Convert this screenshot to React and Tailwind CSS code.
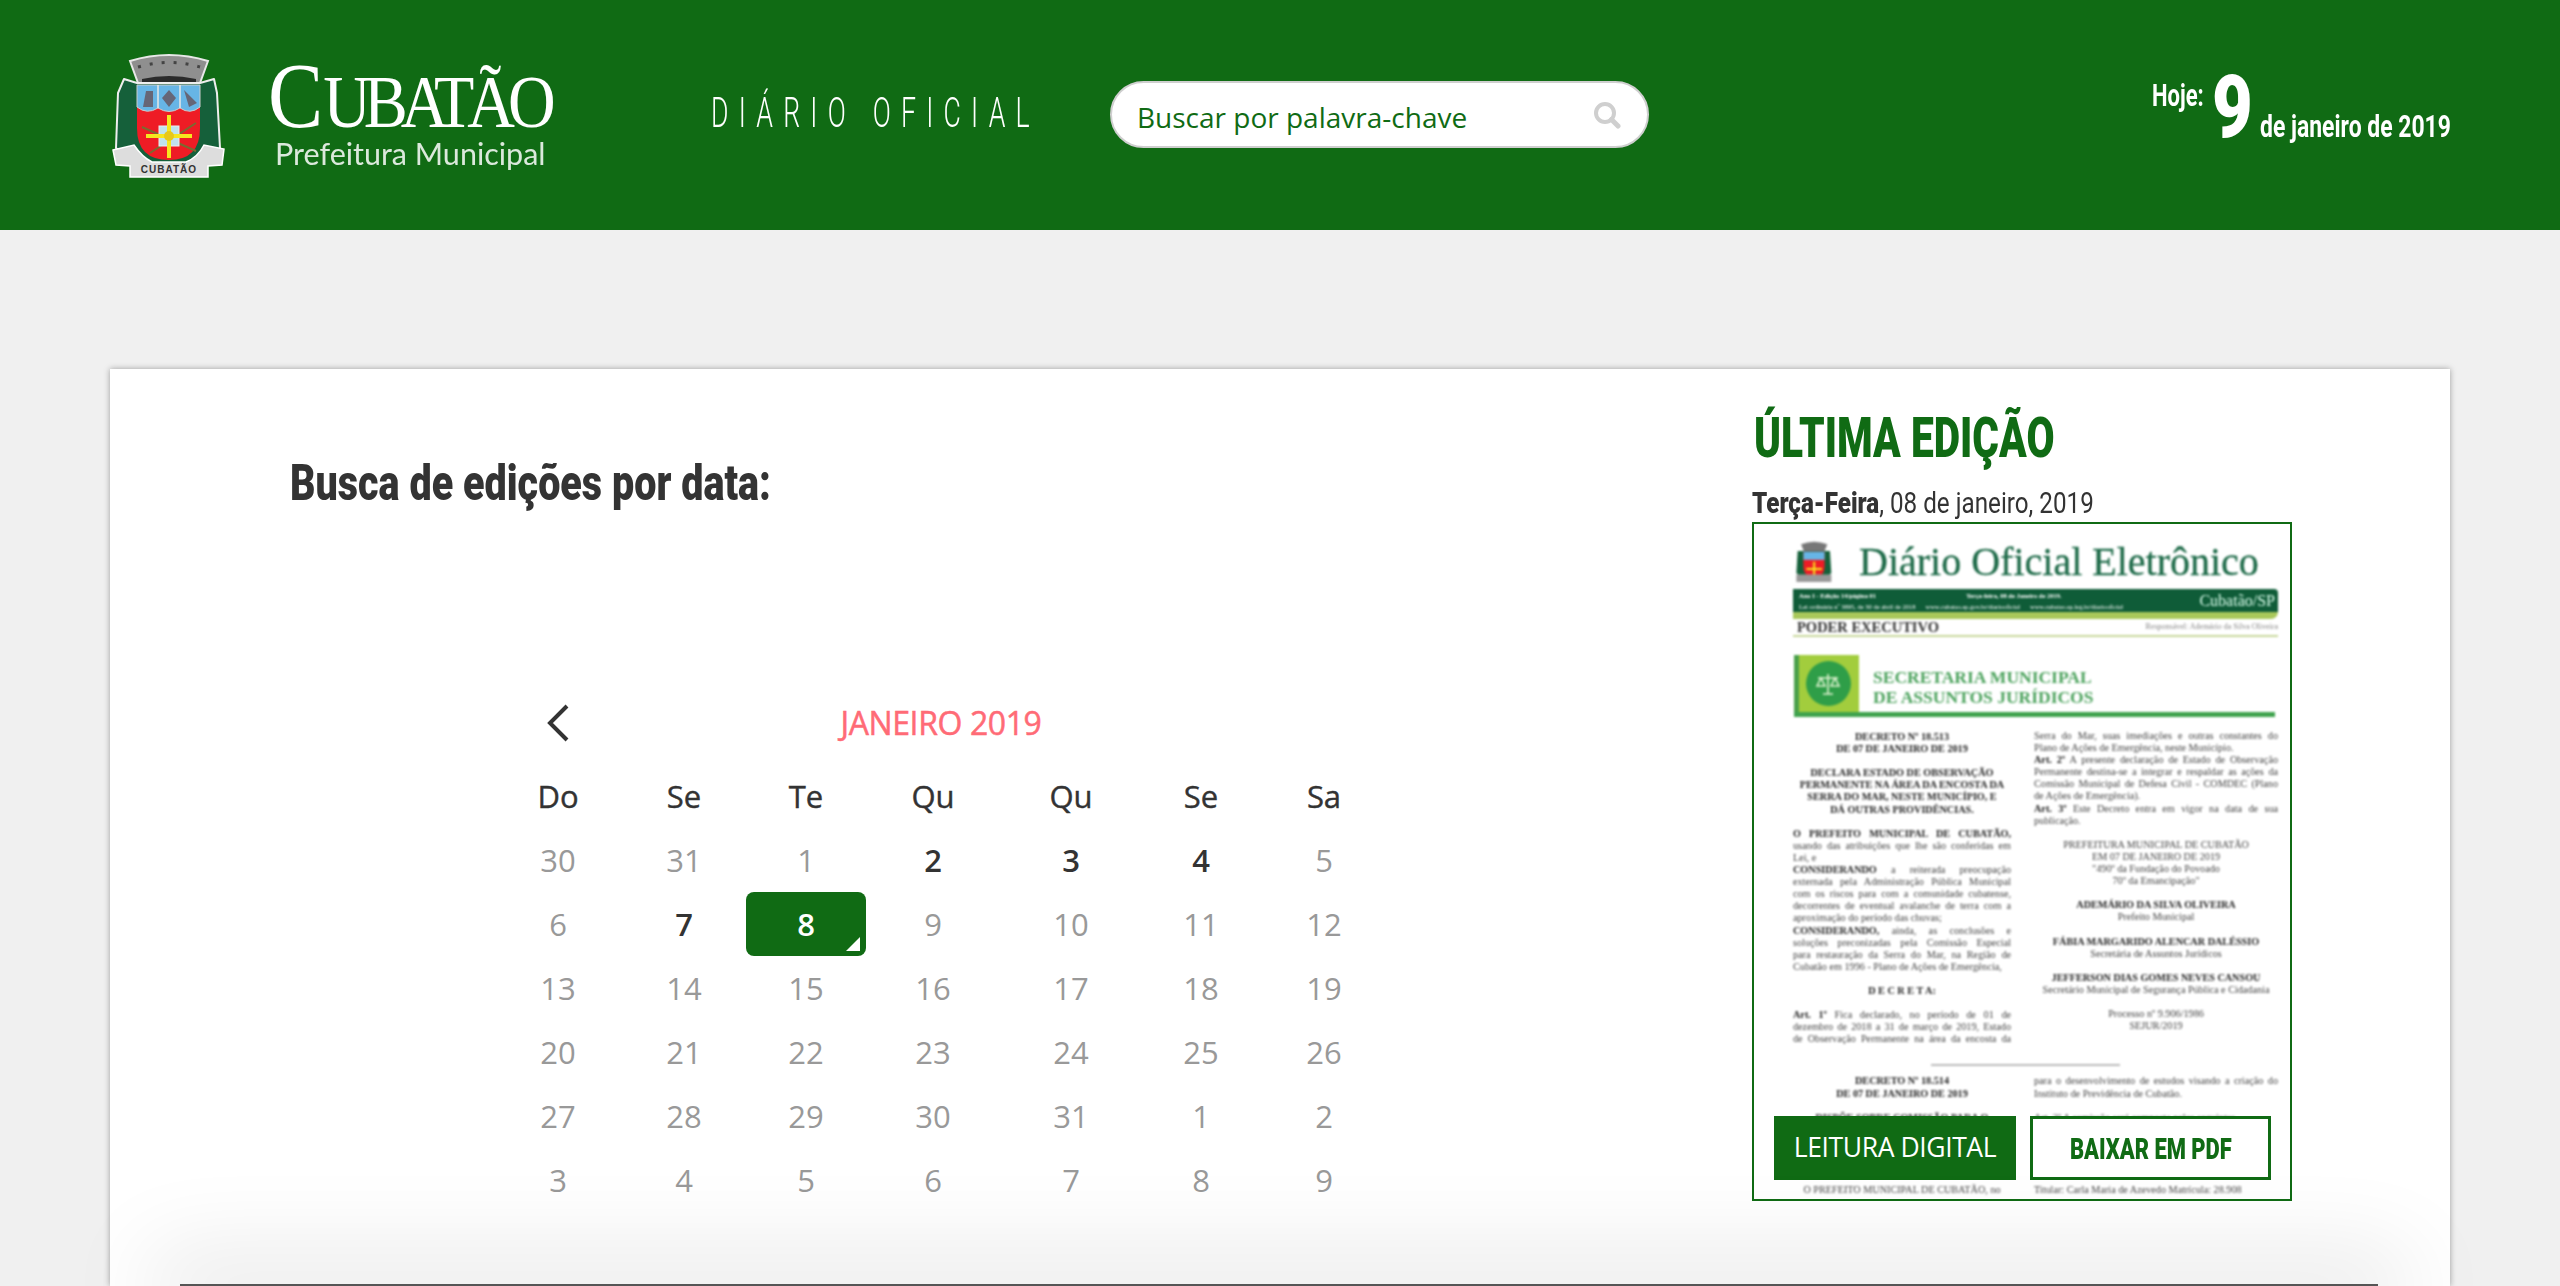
const G = "#106b14";
const cond = { fontFamily: 'Roboto,"Liberation Sans",sans-serif' };

function Crest() {
  return (
    <svg width="113" height="125" viewBox="0 0 113 125" className="shrink-0">
      <path d="M18 8 Q57 -4 96 8 L88 30 H26 Z" fill="#8f8f8f" stroke="#e8e8e8" strokeWidth="2" />
      <path d="M26 14 Q57 5 88 14" stroke="#444" strokeWidth="3" strokeDasharray="3 9" fill="none" />
      <path d="M30 26 Q57 20 84 26 V31 H30 Z" fill="#2b2b2b" />
      <path d="M12 26 L25 30 H88 L102 26 L105 40 L108 95 L90 112 H24 L4 95 L6 40 Z" fill="#15603a" stroke="#eee" strokeWidth="2" strokeLinejoin="round" />
      <path d="M25 32 H88 V75 Q88 107 57 107 Q25 107 25 75 Z" fill="#ee1c25" />
      <path d="M25 32 H88 V54 Q78 62 68 55 Q57 62 46 55 Q35 62 25 54 Z" fill="#67b5e6" stroke="#ccc" strokeWidth="1" />
      <path d="M46 32 V55 M68 32 V55" stroke="#e8e8e8" strokeWidth="1.5" />
      <path d="M34 38 H41 V54 H31 Z M57 37 L64 45 L57 54 L50 45 Z M72 37 L85 50 L77 54 Z" fill="#667" />
      <path d="M30 74 L84 98 M84 70 L38 100" stroke="#7a6a30" strokeWidth="2" />
      <rect x="47" y="73" width="20" height="20" fill="#bfe3ee" stroke="#eee" />
      <path d="M34 83 H80 M57 62 V105" stroke="#f6e61f" strokeWidth="4" />
      <circle cx="57" cy="83" r="5" fill="#e8c81a" />
      <path d="M1 97 L22 92 Q30 104 40 109 L74 109 Q86 104 92 92 L112 96 L110 112 L96 113 V124 H18 V113 L4 112 Z" fill="#ddd" stroke="#fff" strokeWidth="1.5" />
      <text x="57" y="120" textAnchor="middle" fontSize="10" fontWeight="700" letterSpacing="1" fill="#333" fontFamily="Liberation Sans">CUBATÃO</text>
    </svg>
  );
}

function Logo() {
  return (
    <div className="w-[284px] h-[110px] text-white">
      <div className="flex items-end h-[66px] mt-[3px] whitespace-nowrap origin-left scale-x-[.88]" style={{ fontFamily: '"Liberation Serif",serif' }}>
        <span className="text-[94px] leading-[66px]">C</span>
        <span className="text-[75px] leading-[52px] tracking-[-8px]">UBATÃO</span>
      </div>
      <div className="mt-[7px] ml-[7px] text-[30.5px] leading-[36px] whitespace-nowrap opacity-85" style={{ fontFamily: 'Lato,sans-serif' }}>Prefeitura Municipal</div>
    </div>
  );
}

function Header() {
  return (
    <header className="h-[230px] w-full flex items-center pl-[112px] pr-[110px]" style={{ backgroundColor: G }}>
      <Crest />
      <div className="ml-[43px]"><Logo /></div>
      <div className="ml-[159px] w-[320px] text-white text-[43px] leading-none tracking-[16.5px] whitespace-nowrap font-light mt-[-5px]" style={cond}>
        <span className="block origin-left scale-x-[.62]">DIÁRIO OFICIAL</span>
      </div>
      <div className="ml-[79px] w-[539px] h-[67px] rounded-full bg-white border-2 border-[#cfcfcf] flex items-center pl-[25px] pr-[26px] mt-[-1px]">
        <span className="text-[28px] flex-1 mt-[4px]" style={{ color: G, fontFamily: '"Open Sans",sans-serif' }}>Buscar por palavra-chave</span>
        <svg width="28" height="28" viewBox="0 0 28 28" fill="none" stroke="#cfcfcf">
          <circle cx="12" cy="12" r="9" strokeWidth="4" />
          <path d="M18.5 18.5 L25 25" strokeWidth="5" strokeLinecap="round" />
        </svg>
      </div>
      <div className="ml-auto w-[298px] h-[63px] flex text-white whitespace-nowrap font-bold mt-[-1px]" style={cond}>
        <span className="text-[31px] leading-[28px] w-[60px] mt-[-1px]"><span className="block origin-left scale-x-[.71]">Hoje:</span></span>
        <span className="text-[88px] leading-[63px] w-[48px] font-black mt-[-8px]"><span className="block origin-left scale-x-[.8]">9</span></span>
        <span className="text-[31px] leading-[30px] mt-[29px]"><span className="block origin-left scale-x-[.74]">de janeiro de 2019</span></span>
      </div>
    </header>
  );
}

const names = ["Do", "Se", "Te", "Qu", "Qu", "Se", "Sa"];
const days = [30, 31, 1, 2, 3, 4, 5, 6, 7, 8, 9, 10, 11, 12, 13, 14, 15, 16, 17, 18, 19, 20, 21, 22, 23, 24, 25, 26, 27, 28, 29, 30, 31, 1, 2, 3, 4, 5, 6, 7, 8, 9];
const active = new Set([3, 4, 5, 8]);

function Calendar() {
  return (
    <div className="w-[894px] ml-[384px] mt-[188px]" style={{ fontFamily: '"Open Sans",sans-serif' }}>
      <div className="grid grid-cols-[128px_1fr_128px] items-center h-[48px]">
        <div className="flex justify-center">
          <svg width="24" height="38" viewBox="0 0 24 38" fill="none" stroke="#333" strokeWidth="4"><path d="M21 2 L4 19 L21 36" /></svg>
        </div>
        <div className="text-center text-[32px] [-webkit-text-stroke:0.5px] tracking-[-0.4px] text-[#ff6b76]">JANEIRO 2019</div>
        <div />
      </div>
      <div className="grid grid-cols-[128px_124px_120px_134px_142px_118px_128px] auto-rows-[64px] mt-[17px] items-center text-center text-[31px]">
        {names.map((n, i) => <div key={i} className="text-[#333] [-webkit-text-stroke:0.4px]">{n}</div>)}
        {days.map((d, i) => {
          if (i === 9) return (
            <div key={i} className="relative h-[64px] rounded-[8px] flex items-center justify-center text-white font-semibold" style={{ backgroundColor: G }}>
              {d}
              <span className="absolute right-[6px] bottom-[5px] w-0 h-0 border-l-[14px] border-l-transparent border-b-[14px] border-b-white" />
            </div>
          );
          return <div key={i} className={active.has(i) ? "text-[#333] font-semibold" : "text-[#999]"}>{d}</div>;
        })}
      </div>
    </div>
  );
}

function L({ children, j, b, c }) {
  const cls = "h-[12.1px] whitespace-nowrap " + (j ? "[text-align-last:justify] " : "") + (c ? "text-center " : "") + (b ? "font-bold text-[#222]" : "text-[#444]");
  return <div className={cls}>{children}</div>;
}

function Doc() {
  return (
    <div className="pl-[39px] pr-[12px] pt-[17px] blur-[0.8px]" style={{ fontFamily: '"Liberation Serif",serif' }}>
      <div className="flex items-center h-[42px]">
        <svg width="38" height="42" viewBox="0 0 113 125" className="shrink-0 ml-[2px]">
          <path d="M18 10 Q57 -5 96 10 L88 30 H26 Z" fill="#777" />
          <path d="M8 30 H104 L108 95 L90 112 H24 L4 95 Z" fill="#15603a" />
          <path d="M25 32 H88 V75 Q88 107 57 107 Q25 107 25 75 Z" fill="#ee1c25" />
          <path d="M25 32 H88 V56 H25 Z" fill="#67b5e6" />
          <path d="M34 83 H80 M57 62 V105" stroke="#f6e61f" strokeWidth="6" />
          <path d="M4 100 H108 V122 H4 Z" fill="#999" />
        </svg>
        <div className="ml-[26px] text-[40px] leading-none text-[#1d6a48] whitespace-nowrap [-webkit-text-stroke:0.3px]">Diário Oficial Eletrônico</div>
      </div>
      <div className="mt-[6px] h-[23px] bg-[#0f5c38] text-white flex justify-between items-center pl-[6px] pr-[3px] rounded-tr-[4px]">
        <div className="text-[6.5px] leading-[11px] whitespace-nowrap">
          <div className="flex gap-[90px] font-bold"><span>Ano I - Edição 14/página 01</span><span>Terça-feira, 08 de Janeiro de 2019.</span></div>
          <div className="flex gap-[10px]"><span>Lei ordinária nº 3895, de 30 de abril de 2018</span><span>www.cubatao.sp.gov.br/diariooficial</span><span>www.cubatao.sp.leg.br/diariooficial</span></div>
        </div>
        <span className="text-[16px] leading-none text-[#dfe]">Cubatão/SP</span>
      </div>
      <div className="h-[7px] bg-[#a9c85a] rounded-br-[10px]" />
      <div className="flex justify-between items-center h-[18px] pl-[4px] border-b-2 border-[#c9d89c]">
        <span className="text-[14.5px] leading-none font-bold text-[#333]">PODER EXECUTIVO</span>
        <span className="text-[8px] text-[#888]">Responsável: Ademário da Silva Oliveira</span>
      </div>
      <div className="mt-[18px] ml-[1px] mr-[3px] flex h-[57px]">
        <div className="w-[65px] shrink-0 bg-[#a2cd3d] border-l-[5px] border-[#4aa04a] flex items-center justify-center">
          <div className="w-[45px] h-[45px] rounded-full bg-[#2f9e48] flex items-center justify-center ml-[-2px]">
            <svg width="26" height="26" viewBox="0 0 26 26" fill="none" stroke="#dff2d0" strokeWidth="1.6"><path d="M13 3 V23 M8 23 H18 M3 7 H23 M6 7 L2 15 H10 Z M20 7 L16 15 H24 Z" /></svg>
          </div>
        </div>
        <div className="pl-[14px] pt-[12px] text-[17.5px] leading-[20px] font-bold text-[#4ba25c] whitespace-nowrap">
          <div>SECRETARIA MUNICIPAL</div><div>DE ASSUNTOS JURÍDICOS</div>
        </div>
      </div>
      <div className="ml-[1px] mr-[3px] h-[5px] bg-[#3fa34d]" />
      <div className="grid grid-cols-[218px_244px] gap-x-[23px] mt-[14px] text-[10.2px] leading-[12.1px]">
        <div>
          <L b c>DECRETO Nº 18.513</L><L b c>DE 07 DE JANEIRO DE 2019</L><L>&nbsp;</L>
          <L b c>DECLARA ESTADO DE OBSERVAÇÃO</L><L b c>PERMANENTE NA ÁREA DA ENCOSTA DA</L><L b c>SERRA DO MAR, NESTE MUNICÍPIO, E</L><L b c>DÁ OUTRAS PROVIDÊNCIAS.</L><L>&nbsp;</L>
          <L j><b className="text-[#222]">O PREFEITO MUNICIPAL DE CUBATÃO,</b></L><L j>usando das atribuições que lhe são conferidas em</L><L>Lei, e</L>
          <L j><b className="text-[#222]">CONSIDERANDO</b> a reiterada preocupação</L><L j>externada pela Administração Pública Municipal</L><L j>com os riscos para com a comunidade cubatense,</L><L j>decorrentes de eventual avalanche de terra com a</L><L>aproximação do período das chuvas;</L>
          <L j><b className="text-[#222]">CONSIDERANDO,</b> ainda, as conclusões e</L><L j>soluções preconizadas pela Comissão Especial</L><L j>para restauração da Serra do Mar, na Região de</L><L>Cubatão em 1996 - Plano de Ações de Emergência,</L><L>&nbsp;</L>
          <L b c>D E C R E T A:</L><L>&nbsp;</L>
          <L j><b className="text-[#222]">Art. 1º</b> Fica declarado, no período de 01 de</L><L j>dezembro de 2018 a 31 de março de 2019, Estado</L><L j>de Observação Permanente na área da encosta da</L>
        </div>
        <div className="mt-[-1px]">
          <L j>Serra do Mar, suas imediações e outras constantes do</L><L>Plano de Ações de Emergência, neste Município.</L>
          <L j><b className="text-[#222]">Art. 2º</b> A presente declaração de Estado de Observação</L><L j>Permanente destina-se a integrar e respaldar as ações da</L><L j>Comissão Municipal de Defesa Civil - COMDEC (Plano</L><L>de Ações de Emergência).</L>
          <L j><b className="text-[#222]">Art. 3º</b> Este Decreto entra em vigor na data de sua</L><L>publicação.</L><L>&nbsp;</L>
          <L c>PREFEITURA MUNICIPAL DE CUBATÃO</L><L c>EM 07 DE JANEIRO DE 2019</L><L c>"490º da Fundação do Povoado</L><L c>70º da Emancipação"</L><L>&nbsp;</L>
          <L b c>ADEMÁRIO DA SILVA OLIVEIRA</L><L c>Prefeito Municipal</L><L>&nbsp;</L>
          <L b c>FÁBIA MARGARIDO ALENCAR DALÉSSIO</L><L c>Secretária de Assuntos Jurídicos</L><L>&nbsp;</L>
          <L b c>JEFFERSON DIAS GOMES NEVES CANSOU</L><L c>Secretário Municipal de Segurança Pública e Cidadania</L><L>&nbsp;</L>
          <L c>Processo nº 9.906/1986</L><L c>SEJUR/2019</L>
        </div>
      </div>
      <div className="ml-[138px] w-[189px] h-[2px] bg-[#bbb] mt-[19px]" />
      <div className="grid grid-cols-[218px_244px] gap-x-[23px] mt-[9px] text-[10.2px] leading-[12.1px]">
        <div>
          <L b c>DECRETO Nº 18.514</L><L b c>DE 07 DE JANEIRO DE 2019</L><L>&nbsp;</L>
          <L b c>DISPÕE SOBRE COMISSÃO PARA O</L><L>&nbsp;</L><L>&nbsp;</L><L>&nbsp;</L><L>&nbsp;</L><L>&nbsp;</L>
          <L c>O PREFEITO MUNICIPAL DE CUBATÃO, no</L>
        </div>
        <div>
          <L j>para o desenvolvimento de estudos visando a criação do</L><L>Instituto de Previdência de Cubatão.</L><L>&nbsp;</L>
          <L>Art. 2º A comissão será composta pelos seguintes</L><L>&nbsp;</L><L>&nbsp;</L><L>&nbsp;</L><L>&nbsp;</L><L>&nbsp;</L>
          <L>Titular: Carla Maria de Azevedo Matrícula: 28.908</L>
        </div>
      </div>
    </div>
  );
}

function Latest() {
  return (
    <aside className="w-[540px] ml-auto mr-[158px] pt-[35px] shrink-0">
      <h2 className="text-[56px] leading-[68px] font-black whitespace-nowrap ml-[2px]" style={{ ...cond, color: G }}>
        <span className="block origin-left scale-x-[.727]">ÚLTIMA EDIÇÃO</span>
      </h2>
      <div className="text-[30px] leading-[34px] text-[#333] whitespace-nowrap mt-[14px]" style={cond}>
        <span className="block origin-left scale-x-[.807]"><b className="font-black">Terça-Feira</b>, 08 de janeiro, 2019</span>
      </div>
      <div className="relative mt-[2px] h-[679px] border-2 bg-white overflow-hidden" style={{ borderColor: G }}>
        <Doc />
        <div className="absolute left-[20px] top-[592px] flex gap-[14px]">
          <div className="w-[242px] h-[64px] flex items-center justify-center text-white text-[26.5px] tracking-[-0.4px]" style={{ backgroundColor: G, fontFamily: '"Open Sans",sans-serif' }}>LEITURA DIGITAL</div>
          <div className="w-[241px] h-[64px] bg-white border-[3px] flex items-center justify-center" style={{ borderColor: G, color: G }}>
            <span className="text-[30px] font-black whitespace-nowrap scale-x-[.73]" style={cond}>BAIXAR EM PDF</span>
          </div>
        </div>
      </div>
    </aside>
  );
}

export default function App() {
  return (
    <div className="w-full h-[1286px] overflow-hidden bg-[#f0f0f0] flex flex-col">
      <Header />
      <main className="relative mt-[139px] mx-[110px] flex-1 bg-white shadow-[0_0_6px_rgba(0,0,0,0.35)] flex">
        <div className="flex-1">
          <h1 className="ml-[180px] mt-[86px] text-[50px] leading-[56px] font-black text-[#333] whitespace-nowrap" style={cond}>
            <span className="block origin-left scale-x-[.79]">Busca de edições por data:</span>
          </h1>
          <Calendar />
        </div>
        <Latest />
        <div className="absolute left-[70px] right-[72px] bottom-0 h-[2px] bg-[#555] shadow-[0_0_90px_30px_rgba(0,0,0,0.1)]" />
      </main>
    </div>
  );
}
